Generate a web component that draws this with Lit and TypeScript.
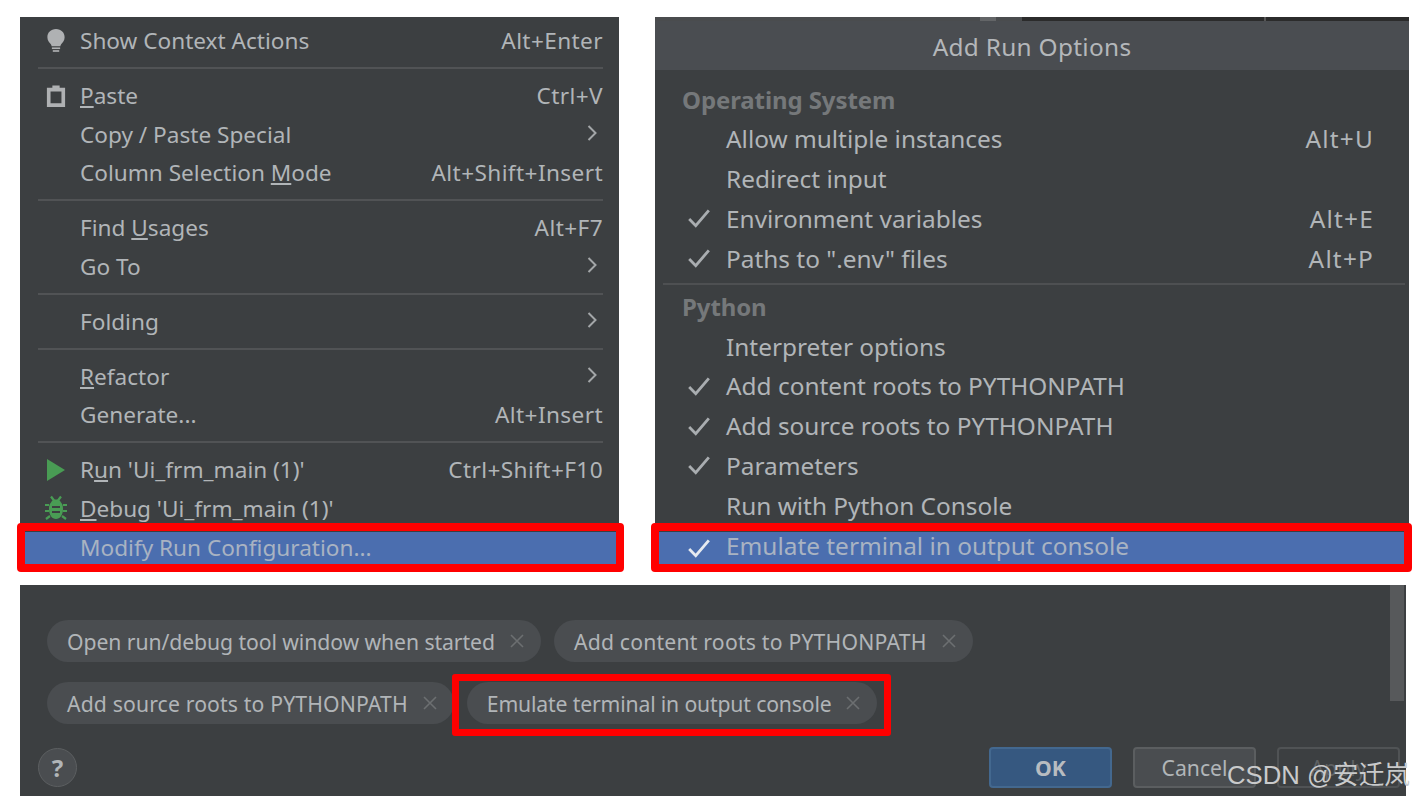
import { LitElement, html, css } from "lit";
import { customElement } from "lit/decorators.js";

const chevron = html`<svg class="chev" viewBox="0 0 12 18" width="12" height="18"><path d="M2.5 2 L9.5 9 L2.5 16" fill="none" stroke="#a3a6a8" stroke-width="2"/></svg>`;
const bulb = html`<svg viewBox="0 0 24 28" width="22" height="28"><path d="M12 1C6.3 1 2.6 5 2.6 9.8c0 3.4 2 5.6 3.6 7.5.7.9 1 1.6 1 2.4h9.6c0-.8.3-1.5 1-2.4 1.600-1.900 3.600-4.100 3.600-7.500C21.400 5 17.700 1 12 1z" fill="#afb1b3"/><rect x="7.500" y="21" width="9" height="1.800" fill="#afb1b3"/><rect x="8.500" y="24" width="7" height="1.800" fill="#afb1b3"/></svg>`;
const clip = html`<svg viewBox="0 0 22 26" width="20" height="24"><path fill-rule="evenodd" d="M1 4h6V1.500h8V4h6v21H1zM5 8v13h12V8z" fill="#afb1b3"/></svg>`;
const play = html`<svg viewBox="0 0 20 24" width="20" height="24"><path d="M1 1 L19 12 L1 23z" fill="#499c54"/></svg>`;
const bug = html`<svg viewBox="0 0 24 26" width="24" height="26"><g stroke="#499c54" stroke-width="2.200" fill="none"><path d="M7 1.500 L10 5.500M17 1.500 L14 5.500M1 10h4M23 10h-4M1 16h4M23 16h-4M2 24l4-3M22 24l-4-3"/></g><path fill-rule="evenodd" d="M7 7.500C8 5 10 4.500 12 4.500S16 5 17 7.500C18.500 9 19 11 19 14c0 6-3 10-7 10s-7-4-7-10c0-3 .5-5 2-6.500zM8 11v2h8v-2zM8 16v2h8v-2z" fill="#499c54"/></svg>`;
const check = (c: string) => html`<svg viewBox="0 0 22 20" width="24" height="22"><path d="M2 11 L8 17 L20 3" fill="none" stroke="${c}" stroke-width="2.600"/></svg>`;
const times = html`<svg class="x" viewBox="0 0 14 14" width="14" height="14"><path d="M1 1 L13 13 M13 1 L1 13" stroke="#6c6f71" stroke-width="1.600" fill="none"/></svg>`;

type Row = { t: unknown; k?: string; icon?: unknown; sub?: boolean };
const leftGroups: Row[][] = [
  [{ t: "Show Context Actions", k: "Alt+Enter", icon: bulb }],
  [
    { t: html`<u>P</u>aste`, k: "Ctrl+V", icon: clip },
    { t: "Copy / Paste Special", sub: true },
    { t: html`Column Selection <u>M</u>ode`, k: "Alt+Shift+Insert" },
  ],
  [
    { t: html`Find <u>U</u>sages`, k: "Alt+F7" },
    { t: "Go To", sub: true },
  ],
  [{ t: "Folding", sub: true }],
  [
    { t: html`<u>R</u>efactor`, sub: true },
    { t: "Generate...", k: "Alt+Insert" },
  ],
  [
    { t: html`R<u>u</u>n 'Ui_frm_main (1)'`, k: "Ctrl+Shift+F10", icon: play },
    { t: html`<u>D</u>ebug 'Ui_frm_main (1)'`, icon: bug },
  ],
];

const osRows = [
  { t: "Allow multiple instances", k: "Alt+U" },
  { t: "Redirect input" },
  { t: "Environment variables", k: "Alt+E", c: true },
  { t: 'Paths to ".env" files', k: "Alt+P", c: true },
];
const pyRows = [
  { t: "Interpreter options" },
  { t: "Add content roots to PYTHONPATH", c: true },
  { t: "Add source roots to PYTHONPATH", c: true },
  { t: "Parameters", c: true },
  { t: "Run with Python Console" },
];

@customElement("app-root")
export class AppRoot extends LitElement {
  static styles = css`
    :host {
      display: block;
      width: 1415px;
      height: 802px;
      overflow: hidden;
      position: relative;
      background: #fff;
      box-sizing: border-box;
      padding: 17px 0 0 20px;
      font-family: "Noto Sans", "Open Sans", sans-serif;
      color: #b1b5b8;
    }
    .top { display: flex; gap: 36px; height: 552px; margin-bottom: 16px; }
    .menu {
      width: 599px;
      height: 552px;
      background: #3c3f41;
      padding-top: 4.5px;
      box-sizing: border-box;
      font-size: 22.6px;
    }
    .row {
      height: 38.5px;
      display: flex;
      align-items: center;
      padding: 0 16px 0 0;
      white-space: nowrap;
    }
    .ico { width: 60px; display: flex; justify-content: center; padding-left: 11px; box-sizing: border-box; flex: none; }
    .grow { flex: 1; }
    .key { letter-spacing: 0.4px; }
    .chev { margin: 0 5px 2px 0; }
    .sep { height: 16.5px; display: flex; align-items: center; margin: 0 16px 0 18px; }
    .sep::before { content: ""; flex: 1; height: 2px; background: #515355; }
    .hl {
      height: 32px;
      background: #4b6eaf;
      position: relative;
      display: flex;
      align-items: center;
      white-space: nowrap;
      color: #a9b3c2;
    }
    .hl::after {
      content: "";
      position: absolute;
      inset: -9px -8px -8px -8px;
      border: 8px solid #ff0000;
      border-radius: 4px;
    }
    .menu .hl { margin: 4.5px 3px 0 5px; }
    .menu .hl .ico { width: 55px; }
    .menu .hl .hltext { padding-bottom: 2px; }
    .options {
      width: 754px;
      height: 552px;
      background: #3c3f41;
      box-sizing: border-box;
      font-size: 24.4px;
    }
    .strip { height: 4px; display: flex; background: #4a4c4e; }
    .strip .a { width: 325px; }
    .strip .b { width: 16px; background: #636567; }
    .strip .c { width: 26px; }
    .strip .d { width: 242px; background: #2b2b2b; }
    .strip .e { width: 2px; background: #555; }
    .strip .f { flex: 1; background: #2b2b2b; }
    .title {
      height: 49px;
      background: #4a4d51;
      display: flex;
      align-items: center;
      justify-content: center;
      color: #b4b7ba;
      letter-spacing: 0.3px;
      padding-top: 2px;
      box-sizing: border-box;
    }
    .list { padding: 9px 8px 0 8px; }
    .head {
      height: 40px;
      display: flex;
      align-items: center;
      padding-left: 19px;
      font-size: 24px;
      font-weight: 700;
      color: #75787a;
      letter-spacing: -0.1px;
    }
    .opt { height: 39.8px; display: flex; align-items: center; white-space: nowrap; padding-right: 27px; }
    .opt .key { letter-spacing: 1.2px; }
    .chk { width: 63px; flex: none; display: flex; justify-content: center; padding-left: 8px; box-sizing: border-box; }
    .osep { height: 2px; background: #4e5052; margin: 5px -4px 1px 0; }
    .options .hl { margin: 7px -3px 0 -4px; padding-left: 4px; }
    .hltext { padding-bottom: 6px; }
    .bottom {
      width: 1386px;
      height: 211px;
      background: #3c3f41;
      box-sizing: border-box;
      position: relative;
      padding: 35px 0 0 27px;
      font-size: 21.2px;
    }
    .scroll { position: absolute; right: 2px; top: 0; width: 14px; height: 116px; background: #57595b; }
    .chips { display: flex; gap: 13px; height: 42px; margin-bottom: 20px; }
    .chip {
      height: 42px;
      border-radius: 21px;
      background: #4a4d50;
      display: flex;
      align-items: center;
      gap: 15px;
      padding: 0 17px 0 20px;
      white-space: nowrap;
      box-sizing: border-box;
    }
    .chip.caps { letter-spacing: 0.2px; }
    .chip.caps2 { letter-spacing: 0.14px; }
    .chip.tight { letter-spacing: -0.08px; }
    .chip.framed { position: relative; letter-spacing: -0.16px; }
    .chip.framed::after {
      content: "";
      position: absolute;
      inset: -8px -14px -12px -15px;
      border: 7px solid #ff0000;
      border-radius: 3px;
    }
    .foot {
      display: flex;
      align-items: flex-start;
      margin: 0 6px 0 -9px;
    }
    .help {
      width: 39px;
      height: 39px;
      margin-top: 4px;
      border-radius: 50%;
      background: #4a4d50;
      border: 1px solid #5c5f61;
      box-sizing: border-box;
      display: flex;
      align-items: center;
      justify-content: center;
      font-weight: 700;
      font-size: 24px;
      color: #b1b5b8;
    }
    .btn {
      width: 123px;
      height: 41px;
      border-radius: 4px;
      box-sizing: border-box;
      display: flex;
      align-items: center;
      justify-content: center;
      border: 2px solid #5b5e60;
      margin: 3px 0 0 21px;
      background: #4a4d50;
    }
    .btn.ok { background: #365880; border-color: #43688f; font-weight: 700; color: #b8bcc0; }
    .btn.ap { background: transparent; border-color: #505355; color: #5f6264; }
    .mark {
      position: absolute;
      left: 1227px;
      top: 757px;
      font-family: "Liberation Sans", "Noto Sans CJK SC", sans-serif;
      font-size: 25.7px;
      line-height: 36px;
      color: #c9cacb;
      white-space: nowrap;
    }
  `;

  private menuRow(r: Row) {
    return html`<div class="row">
      <span class="ico">${r.icon ?? ""}</span>
      <span class="grow">${r.t}</span>
      ${r.k ? html`<span class="key">${r.k}</span>` : ""}
      ${r.sub ? chevron : ""}
    </div>`;
  }

  private optRow(r: { t: string; k?: string; c?: boolean }) {
    return html`<div class="opt">
      <span class="chk">${r.c ? check("#a9adb0") : ""}</span>
      <span class="grow">${r.t}</span>
      ${r.k ? html`<span class="key">${r.k}</span>` : ""}
    </div>`;
  }

  render() {
    return html`
      <div class="top">
        <section class="menu">
          ${leftGroups.map(
            (g, i) => html`${i ? html`<div class="sep"></div>` : ""}${g.map((r) => this.menuRow(r))}`
          )}
          <div class="hl">
            <span class="ico"></span>
            <span class="hltext">Modify Run Configuration...</span>
          </div>
        </section>
        <section class="options">
          <div class="strip">
            <i class="a"></i><i class="b"></i><i class="c"></i><i class="d"></i><i class="e"></i><i class="f"></i>
          </div>
          <div class="title">Add Run Options</div>
          <div class="list">
            <div class="head">Operating System</div>
            ${osRows.map((r) => this.optRow(r))}
            <div class="osep"></div>
            <div class="head">Python</div>
            ${pyRows.map((r) => this.optRow(r))}
            <div class="hl">
              <span class="chk">${check("#e6eaf0")}</span>
              <span class="hltext">Emulate terminal in output console</span>
            </div>
          </div>
        </section>
      </div>
      <section class="bottom">
        <div class="scroll"></div>
        <div class="chips">
          <div class="chip tight">Open run/debug tool window when started ${times}</div>
          <div class="chip caps">Add content roots to PYTHONPATH ${times}</div>
        </div>
        <div class="chips">
          <div class="chip caps2">Add source roots to PYTHONPATH ${times}</div>
          <div class="chip framed">Emulate terminal in output console ${times}</div>
        </div>
        <div class="foot">
          <div class="help">?</div>
          <span class="grow"></span>
          <div class="btn ok">OK</div>
          <div class="btn">Cancel</div>
          <div class="btn ap">Apply</div>
        </div>
      </section>
      <div class="mark">CSDN @安迁岚</div>
    `;
  }
}
